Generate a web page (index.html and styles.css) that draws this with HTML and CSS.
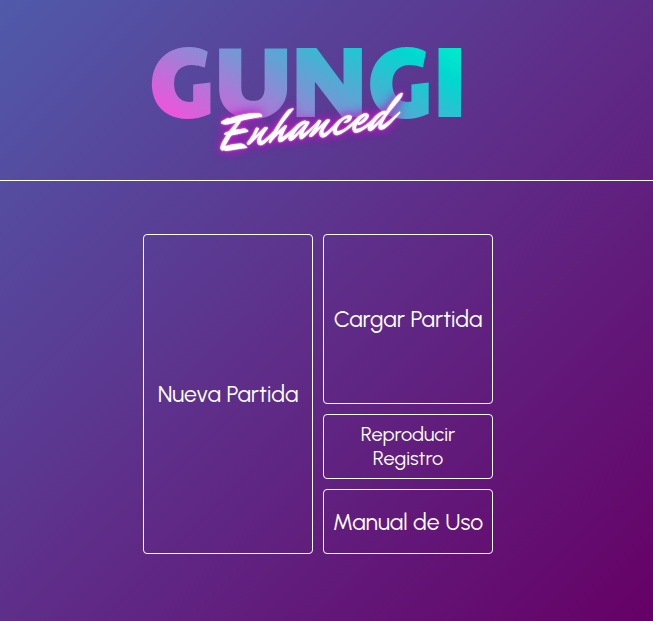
FILE: index.html
```html
<!DOCTYPE html>
<html lang="es">
<head>
<meta charset="utf-8">
<meta name="viewport" content="width=device-width, initial-scale=1">
<title>Gungi Enhanced</title>
<link rel="stylesheet" href="styles.css">
</head>
<body>
<header class="header">
  <h1 class="logo">
    <span class="logo-name">GUNGI</span>
    <span class="logo-tag">Enhanced</span>
  </h1>
</header>
<main class="main">
  <nav class="menu" aria-label="Menú principal">
    <button type="button" class="tile tile-new">Nueva Partida</button>
    <button type="button" class="tile">Cargar Partida</button>
    <button type="button" class="tile tile-small">Reproducir Registro</button>
    <button type="button" class="tile">Manual de Uso</button>
  </nav>
</main>
</body>
</html>
```

FILE: styles.css
```css
* {
  box-sizing: border-box;
}

body {
  margin: 0;
  min-height: 100vh;
  color: #fff;
  font-family: Urbanist, Lato, sans-serif;
  background: linear-gradient(135deg, #505aaa 0%, #5e2f8a 48%, #660066 100%);
}

.header {
  display: flex;
  justify-content: center;
  padding: 26px 37px 32px 0;
  border-bottom: 1px solid #fff;
}

.logo {
  position: relative;
  margin: 0;
  font-weight: 400;
}

.logo-name {
  display: block;
  font-family: "Paytone One", Lato, sans-serif;
  font-size: 100px;
  line-height: 100px;
  padding-bottom: 22px;
  color: transparent;
  background: linear-gradient(30deg, #ff4bdc 10%, #00d8d0 80%, #00f0c8 94%);
  background-clip: text;
  -webkit-background-clip: text;
}

.logo-tag {
  position: absolute;
  left: 72px;
  bottom: 0;
  font-family: "Mr Dafoe", "Brush Script MT", cursive;
  font-size: 50px;
  line-height: 48px;
  transform: rotate(-7deg);
  text-shadow: 0 0 2px #f8c8ff, 0 0 8px #c41bc4, 0 0 12px #b010b8;
}

.main {
  display: flex;
  justify-content: center;
  padding: 53px 17px 53px 0;
}

.menu {
  display: grid;
  grid-template-columns: repeat(2, 170px);
  grid-template-rows: 170px 65px 65px;
  gap: 10px;
}

.tile {
  padding: 0 8px;
  border: 1px solid #fff;
  border-radius: 4px;
  background: transparent;
  color: inherit;
  font-family: inherit;
  font-size: 23px;
  font-weight: 400;
  line-height: 28px;
  cursor: pointer;
}

.tile-new {
  grid-row: span 3;
}

.tile-small {
  padding: 0 24px 2px;
  font-size: 20px;
  line-height: 24px;
}

.tile:hover {
  background: rgba(255, 255, 255, 0.1);
}
```
